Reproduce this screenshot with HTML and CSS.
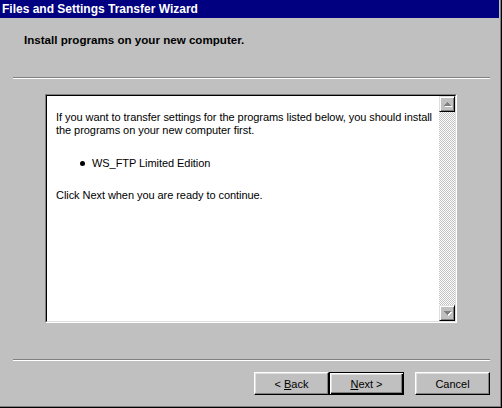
FILE: index.html
```html
<!DOCTYPE html>
<html lang="en">
<head>
    <meta charset="UTF-8">
    <title>Files and Settings Transfer Wizard</title>
    <link rel="stylesheet" href="styles.css">
</head>
<body>
    <div class="window">
        <div class="titlebar">Files and Settings Transfer Wizard</div>

        <div class="header">
            <h1>Install programs on your new computer.</h1>
        </div>
        <div class="separator"></div>

        <div class="content">
            <div class="listbox">
                <div class="listbox-text">
                    <p>If you want to transfer settings for the programs listed below, you should install the programs on your new computer first.</p>
                    <ul>
                        <li>WS_FTP Limited Edition</li>
                    </ul>
                    <p>Click Next when you are ready to continue.</p>
                </div>
                <div class="scrollbar">
                    <div class="scroll-btn">
                        <svg width="7" height="4" viewBox="0 0 7 4"><path d="M3 0h1v1h1v1h1v1h1v1H0V3h1V2h1V1h1z" fill="#808080"/></svg>
                    </div>
                    <div class="scroll-track"></div>
                    <div class="scroll-btn">
                        <svg width="7" height="4" viewBox="0 0 7 4"><path d="M0 0h7v1H6v1H5v1H4v1H3V3H2V2H1V1H0z" fill="#808080"/></svg>
                    </div>
                </div>
            </div>
        </div>

        <div class="separator"></div>

        <div class="buttons">
            <button>&lt; <u>B</u>ack</button>
            <button class="default"><u>N</u>ext &gt;</button>
            <button class="cancel">Cancel</button>
        </div>
    </div>
</body>
</html>
```

FILE: styles.css
```css
body {
    margin: 0;
    background-color: #c0c0c0;
    font-family: 'Liberation Sans', Arial, sans-serif;
    font-size: 11px;
    color: #000;
}

.window {
    width: 502px;
    height: 408px;
    box-sizing: border-box;
    padding: 0 3px 2px 0;
    background-color: #c0c0c0;
    box-shadow: inset -1px -1px #000, inset -2px -2px #808080;
    display: flex;
    flex-direction: column;
}

.titlebar {
    height: 18px;
    line-height: 18px;
    padding-left: 2px;
    background-color: #000080;
    color: #fff;
    font-weight: bold;
    font-size: 12px;
}

.header {
    height: 59px;
    box-sizing: border-box;
    padding: 15px 0 0 24px;
}

.header h1 {
    margin: 0;
    font-size: 11.6px;
    line-height: 14px;
    font-weight: bold;
}

.separator {
    height: 0;
    margin: 0 9px 0 13px;
    border-top: 1px solid #808080;
    border-bottom: 1px solid #fff;
}

.content {
    padding: 15px 0 36px 45px;
}

.listbox {
    width: 412px;
    height: 229px;
    box-sizing: border-box;
    background: #fff;
    border: 1px solid;
    border-color: #808080 #fff #fff #808080;
    display: flex;
}

.listbox-text {
    flex: 1;
    border: 1px solid;
    border-right: none;
    border-color: #000 #dfdfdf #dfdfdf #000;
    padding: 15px 0 0 9px;
    line-height: 13px;
    letter-spacing: -0.06px;
}

.listbox-text p {
    margin: 0;
}

.listbox-text ul {
    margin: 20px 0 19px;
    padding-left: 36px;
    list-style: none;
}

.listbox-text li {
    position: relative;
}

.listbox-text li::before {
    content: "";
    position: absolute;
    left: -12px;
    top: 4px;
    width: 5px;
    height: 5px;
    border-radius: 50%;
    background: #000;
}

.scrollbar {
    width: 16px;
    display: flex;
    flex-direction: column;
    border-top: 1px solid #000;
    border-bottom: 1px solid #dfdfdf;
    border-right: 1px solid #dfdfdf;
}

.scroll-btn {
    width: 16px;
    height: 16px;
    box-sizing: border-box;
    background: #c0c0c0;
    border: 1px solid;
    border-color: #dfdfdf #000 #000 #dfdfdf;
    box-shadow: inset 1px 1px #fff, inset -1px -1px #808080;
    display: flex;
    align-items: center;
    justify-content: center;
}

.scroll-btn svg {
    filter: drop-shadow(1px 1px 0 #fff);
}

.scroll-track {
    flex: 1;
    background-color: #fff;
    background-image: repeating-conic-gradient(#c0c0c0 0 25%, #fff 0 50%);
    background-size: 2px 2px;
}

.buttons {
    display: flex;
    padding: 11px 9px 0 0;
    justify-content: flex-end;
}

button {
    width: 75px;
    height: 23px;
    padding: 0;
    font-family: inherit;
    font-size: 11px;
    color: #000;
    background: #c0c0c0;
    border: 1px solid;
    border-color: #fff #000 #000 #fff;
    box-shadow: inset -1px -1px #808080, inset 1px 1px #dfdfdf;
}

button.default {
    border: 1px solid #000;
    box-shadow: inset 1px 1px #fff, inset -1px -1px #000, inset -2px -2px #808080, inset 2px 2px #dfdfdf;
}

button.cancel {
    margin-left: 11px;
}
```
